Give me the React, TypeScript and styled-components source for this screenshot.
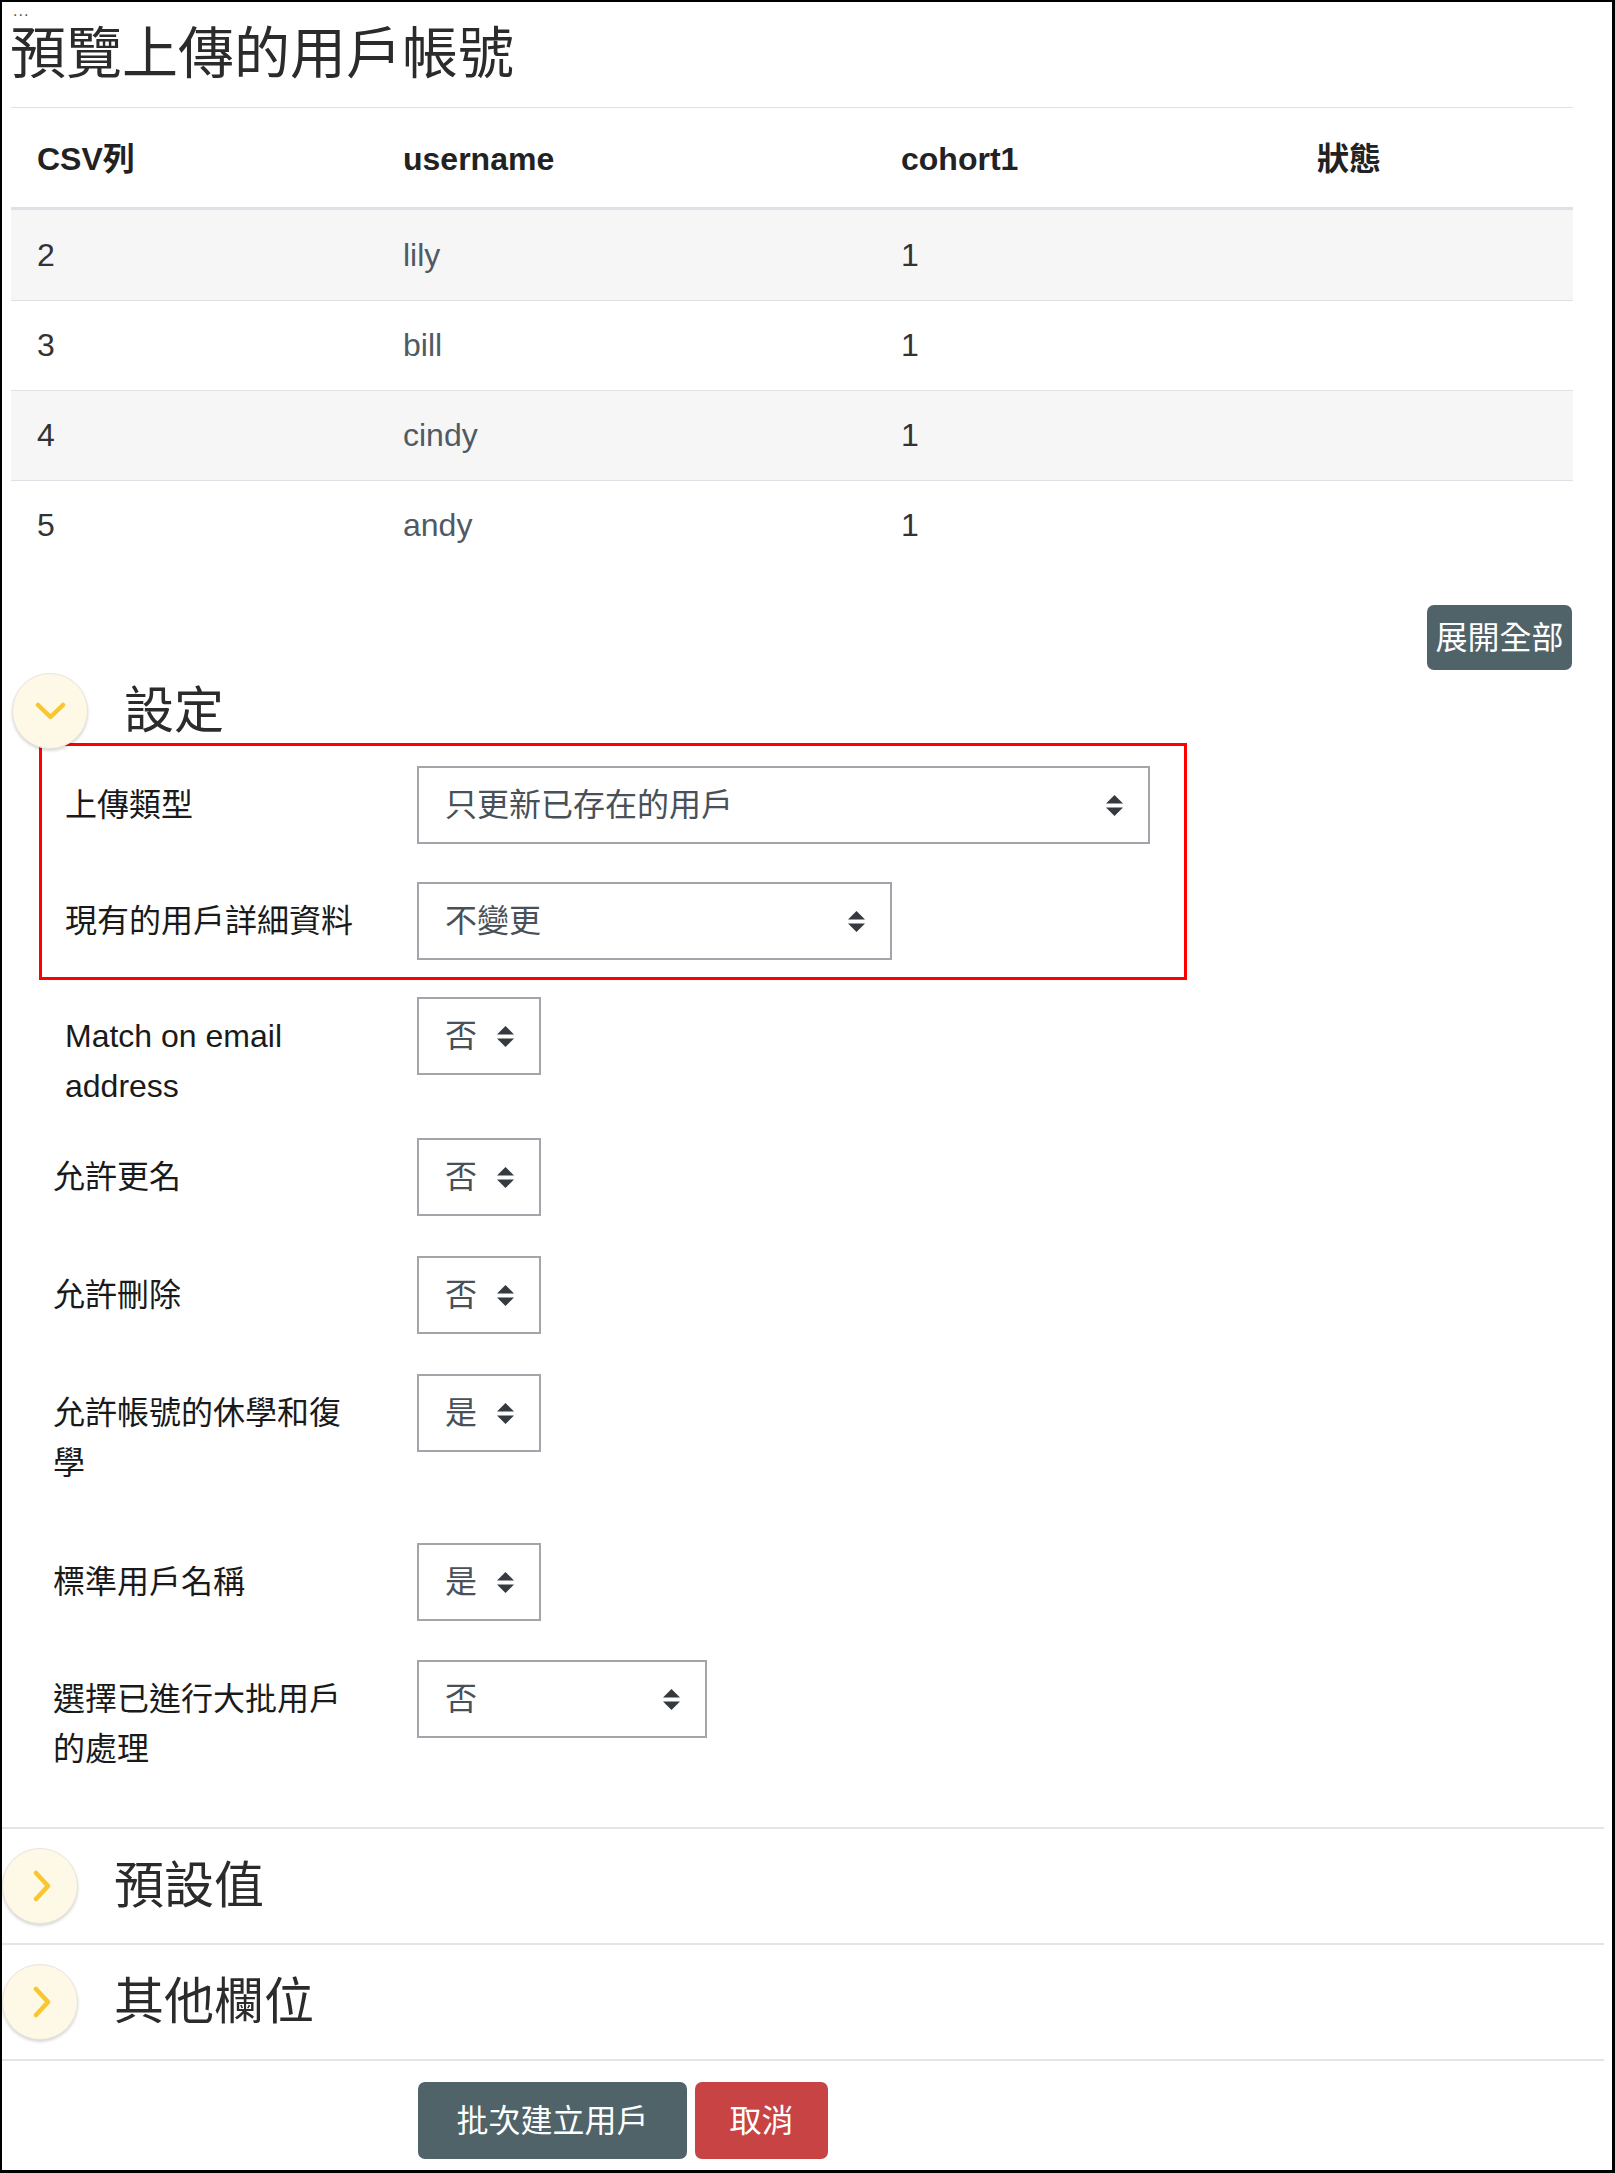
import React from "react";
import styled, { createGlobalStyle } from "styled-components";

const GlobalStyle = createGlobalStyle`
  html, body { margin: 0; padding: 0; background: #fff; }
  body {
    font-family: "Liberation Sans", "Noto Sans CJK TC", Arial, sans-serif;
    color: #1d2125;
  }
  * { box-sizing: border-box; }
`;

const Frame = styled.div`
  width: 1615px;
  height: 2173px;
  border-style: solid;
  border-color: #000;
  border-width: 2px 3px 3px 2px;
  overflow: hidden;
  background: #fff;
`;

const Dots = styled.div`
  height: 20px;
  margin-left: 11px;
  font-size: 16px;
  line-height: 18px;
  color: #555;
  letter-spacing: 1px;
`;

const Title = styled.h2`
  margin: 0 0 21px 8px;
  font-size: 56px;
  line-height: 64px;
  font-weight: 400;
  color: #2b2b2b;
`;

const Table = styled.table`
  margin-left: 9px;
  width: 1562px;
  table-layout: fixed;
  border-collapse: separate;
  border-spacing: 0;
  font-size: 32px;
`;

const Col = styled.col<{ $w: number }>`
  width: ${(p) => p.$w}px;
`;

const Th = styled.th`
  text-align: left;
  font-weight: 700;
  padding: 28px 26px 24px;
  line-height: 47px;
  border-top: 1px solid #dee2e6;
  border-bottom: 3px solid #dee2e6;
  color: #222;
`;

const Tr = styled.tr<{ $striped: boolean }>`
  background: ${(p) => (p.$striped ? "#f6f6f6" : "#fff")};
`;

const Td = styled.td<{ $muted?: boolean }>`
  padding: 21px 26px;
  line-height: 47px;
  border-top: 1px solid #dee2e6;
  color: ${(p) => (p.$muted ? "#505a64" : "#333")};
  tr:first-child > & {
    border-top: 0;
    padding-top: 22px;
  }
`;

const ExpandBar = styled.div`
  display: flex;
  justify-content: flex-end;
  width: 1570px;
  margin-top: 35px;
`;

const Button = styled.button<{ $variant: "secondary" | "danger"; $h: number; $w: number }>`
  font-family: inherit;
  font-size: 32px;
  line-height: 1;
  color: #fff;
  border: 0;
  border-radius: 7px;
  cursor: pointer;
  padding: 0;
  display: inline-flex;
  align-items: center;
  justify-content: center;
  background: ${(p) => (p.$variant === "danger" ? "#c84343" : "#4f6369")};
  height: ${(p) => p.$h}px;
  width: ${(p) => p.$w}px;
`;

const Legend = styled.div<{ $indent: number }>`
  display: flex;
  align-items: center;
  gap: 36px;
  padding-left: ${(p) => p.$indent}px;
`;

const SettingsHeader = styled(Legend)`
  margin-top: 3px;
  margin-bottom: -6px;
`;

const Toggle = styled.span`
  flex: none;
  width: 76px;
  height: 76px;
  border-radius: 50%;
  background: #fdf9e6;
  border: 1px solid #e9e5d8;
  box-shadow: 0 2px 3px rgba(0, 0, 0, 0.16);
  display: flex;
  align-items: center;
  justify-content: center;
`;

const LegendText = styled.span`
  font-size: 50px;
  line-height: 1;
  color: #2b2b2b;
`;

const Highlight = styled.div`
  margin-left: 37px;
  width: 1148px;
  border: 3px solid #ff0000;
  padding: 20px 0 17px;
`;

const FormList = styled.div`
  padding-top: 17px;
`;

const FormRow = styled.div<{ $indent: number; $col: number; $after: number }>`
  display: grid;
  grid-template-columns: ${(p) => p.$col}px auto;
  align-items: start;
  padding-left: ${(p) => p.$indent}px;
  margin-bottom: ${(p) => p.$after}px;
`;

const Label = styled.div`
  max-width: 300px;
  font-size: 32px;
  line-height: 50px;
  padding-top: 14px;
  color: #1a1a1a;
`;

const Select = styled.div<{ $w?: number }>`
  justify-self: start;
  display: flex;
  align-items: center;
  justify-content: space-between;
  gap: 20px;
  height: 78px;
  ${(p) => (p.$w ? `width: ${p.$w}px;` : "")}
  border: 2px solid #a2a6ab;
  padding: 0 25px 0 26px;
  background: #fff;
  color: #495057;
  font-size: 32px;
  line-height: 1;
`;

const Section = styled.section`
  width: 1602px;
  border-top: 2px solid #e2e5e9;
  padding: 19px 0;
`;

const Footer = styled.div`
  width: 1602px;
  border-top: 2px solid #e2e5e9;
  padding: 21px 0 0 416px;
  display: flex;
  gap: 8px;
`;

const ArrowIcon = styled.svg`
  flex: none;
`;

const SelectArrows = () => (
  <ArrowIcon width="17" height="21" viewBox="0 0 17 21">
    <polygon points="8.5,0 17,8.5 0,8.5" fill="#343a40" />
    <polygon points="0,12.5 17,12.5 8.5,21" fill="#343a40" />
  </ArrowIcon>
);

const ChevronDown = () => (
  <svg width="31" height="18" viewBox="0 0 31 18">
    <polyline
      points="3,3 15.5,15 28,3"
      fill="none"
      stroke="#f8c630"
      strokeWidth="4.5"
      strokeLinecap="round"
      strokeLinejoin="round"
    />
  </svg>
);

const ChevronRightIcon = styled.svg`
  margin-left: 4px;
`;

const ChevronRight = () => (
  <ChevronRightIcon width="18" height="32" viewBox="0 0 18 32">
    <polyline
      points="3,3 15,16 3,29"
      fill="none"
      stroke="#f8c630"
      strokeWidth="4.5"
      strokeLinecap="round"
      strokeLinejoin="round"
    />
  </ChevronRightIcon>
);

type Row = { line: string; user: string; cohort: string };
const rows: Row[] = [
  { line: "2", user: "lily", cohort: "1" },
  { line: "3", user: "bill", cohort: "1" },
  { line: "4", user: "cindy", cohort: "1" },
  { line: "5", user: "andy", cohort: "1" },
];

type Field = { label: string; value: string; w?: number; indent: number; col: number; after: number };

const boxed: Field[] = [
  { label: "上傳類型", value: "只更新已存在的用戶", w: 733, indent: 23, col: 352, after: 38 },
  { label: "現有的用戶詳細資料", value: "不變更", w: 475, indent: 23, col: 352, after: 0 },
];

const fields: Field[] = [
  { label: "Match on email address", value: "否", indent: 63, col: 352, after: 27 },
  { label: "允許更名", value: "否", indent: 51, col: 364, after: 40 },
  { label: "允許刪除", value: "否", indent: 51, col: 364, after: 40 },
  { label: "允許帳號的休學和復學", value: "是", indent: 51, col: 364, after: 55 },
  { label: "標準用戶名稱", value: "是", indent: 51, col: 364, after: 39 },
  { label: "選擇已進行大批用戶的處理", value: "否", w: 290, indent: 51, col: 364, after: 53 },
];

const FieldRow = ({ f }: { f: Field }) => (
  <FormRow $indent={f.indent} $col={f.col} $after={f.after}>
    <Label>{f.label}</Label>
    <Select $w={f.w}>
      <span>{f.value}</span>
      <SelectArrows />
    </Select>
  </FormRow>
);

export default function App() {
  return (
    <>
      <GlobalStyle />
      <Frame>
        <Dots>...</Dots>
        <Title>預覽上傳的用戶帳號</Title>
        <Table>
          <colgroup>
            <Col $w={366} />
            <Col $w={498} />
            <Col $w={416} />
            <Col $w={282} />
          </colgroup>
          <thead>
            <tr>
              <Th>CSV列</Th>
              <Th>username</Th>
              <Th>cohort1</Th>
              <Th>狀態</Th>
            </tr>
          </thead>
          <tbody>
            {rows.map((r, i) => (
              <Tr key={r.line} $striped={i % 2 === 0}>
                <Td>{r.line}</Td>
                <Td $muted>{r.user}</Td>
                <Td>{r.cohort}</Td>
                <Td />
              </Tr>
            ))}
          </tbody>
        </Table>
        <ExpandBar>
          <Button $variant="secondary" $h={65} $w={145}>展開全部</Button>
        </ExpandBar>
        <SettingsHeader $indent={10}>
          <Toggle>
            <ChevronDown />
          </Toggle>
          <LegendText>設定</LegendText>
        </SettingsHeader>
        <Highlight>
          {boxed.map((f) => (
            <FieldRow key={f.label} f={f} />
          ))}
        </Highlight>
        <FormList>
          {fields.map((f) => (
            <FieldRow key={f.label} f={f} />
          ))}
        </FormList>
        <Section>
          <Legend $indent={0}>
            <Toggle>
              <ChevronRight />
            </Toggle>
            <LegendText>預設值</LegendText>
          </Legend>
        </Section>
        <Section>
          <Legend $indent={0}>
            <Toggle>
              <ChevronRight />
            </Toggle>
            <LegendText>其他欄位</LegendText>
          </Legend>
        </Section>
        <Footer>
          <Button $variant="secondary" $h={77} $w={269}>批次建立用戶</Button>
          <Button $variant="danger" $h={77} $w={133}>取消</Button>
        </Footer>
      </Frame>
    </>
  );
}
